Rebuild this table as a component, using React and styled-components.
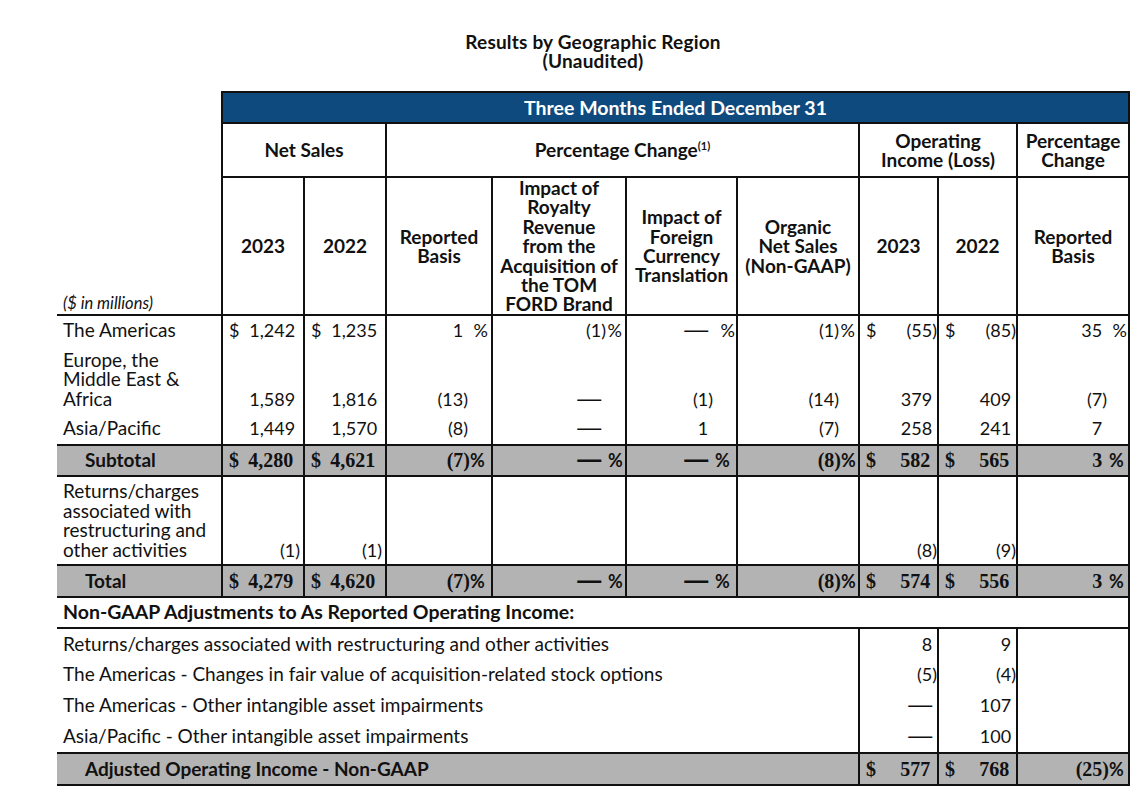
import React from "react";
import styled, { createGlobalStyle } from "styled-components";

const INK = "#111";
const LINE = `2px solid ${INK}`;

const GlobalStyle = createGlobalStyle`
  body {
    margin: 0;
    background: #fff;
    color: ${INK};
    font-family: Lato, "Noto Sans", sans-serif;
  }
`;

const Page = styled.div`
  width: 1072px;
  padding: 32px 0 0 57px;
`;

const Title = styled.header`
  margin-bottom: 21px;

  font-size: 19px;
  font-weight: 700;
  letter-spacing: 0.2px;
  line-height: 19px;
  text-align: center;
`;

const Table = styled.table`
  width: 1072px;
  border-collapse: collapse;
  table-layout: fixed;

  font-size: 19px;
`;

/* td height is content-box here, so the row adds padding and half borders */
const Row = styled.tr`
  background: ${({ $shade }) => ($shade ? "#b3b3b3" : "transparent")};

  & > td {
    height: ${({ $h }) => $h}px;
    ${({ $top }) => $top && `border-top: ${LINE};`}
    ${({ $bottom }) => $bottom && `border-bottom: ${LINE};`}
  }
`;

// single-line rows sit centred, wrapped rows sit on their last line
const DataRow = styled(Row)`
  & > td {
    vertical-align: ${({ $wrap }) => ($wrap ? "bottom" : "middle")};
    padding-bottom: ${({ $wrap }) => ($wrap ? 4 : 0)}px;
  }
`;

const Blank = styled.td`
  padding: 0;
`;

const Banner = styled.td`
  padding: 0;
  border: ${LINE};

  background: #0e4a7e;
  color: #fff;

  font-size: 19.5px;
  font-weight: 700;
  text-align: center;
`;

const Head = styled.td`
  padding: 0 1px;
  border: ${LINE};

  font-weight: 700;
  line-height: 19.4px;
  text-align: center;
  vertical-align: middle;

  sup {
    font-size: 11px;
    line-height: 0;
  }
`;

const Units = styled.td`
  padding: 0 0 1px 6px;
  border-bottom: ${LINE};

  font-size: 16.5px;
  font-style: italic;
  vertical-align: bottom;
`;

const Label = styled.td`
  padding: 0 0 0 ${({ $indent }) => ($indent ? 28 : 6)}px;
  ${({ $edge }) => $edge && `border-right: ${LINE};`}

  font-size: ${({ $size }) => $size || 19}px;
  font-weight: ${({ $bold }) => ($bold ? 700 : 400)};
  line-height: 19.7px;
  white-space: nowrap;
`;

const NumCell = styled.td`
  padding: 0 ${({ $right }) => $right}px 0 6px;
  border-left: ${LINE};
  border-right: ${LINE};
`;

const Fig = styled.div`
  display: flex;
  justify-content: space-between;
  align-items: baseline;

  font-family: ${({ $bold }) =>
    $bold ? '"Liberation Serif", serif' : 'Lato, "Noto Sans", sans-serif'};
  font-size: ${({ $bold }) => ($bold ? 20 : 18)}px;
  font-weight: ${({ $bold }) => ($bold ? 700 : 400)};
  line-height: 20px;
  white-space: nowrap;
`;

const Hidden = styled.span`
  visibility: ${({ $show }) => ($show ? "visible" : "hidden")};
`;

const Pct = styled(Hidden)`
  display: inline-block;
  width: ${({ $w }) => $w}px;

  font-family: Lato, "Noto Sans", sans-serif;
  font-size: 18px;
  font-weight: ${({ $bold }) => ($bold ? 700 : 400)};
  text-align: ${({ $bold }) => ($bold ? "left" : "right")};
`;

const Dash = styled.span`
  font-family: "Liberation Sans", sans-serif;
  font-size: 24px;
  line-height: 0;
`;

const Amount = ({ d, v, neg, pct, slot, bold }) => {
  if (v === undefined) return null;
  const shown = v === "—" ? <Dash>—</Dash> : v;
  return (
    <Fig $bold={bold}>
      <span>{d ? "$" : ""}</span>
      <span>
        {neg && "("}
        {shown}
        <Hidden $show={neg}>)</Hidden>
        {slot > 0 && (
          <Pct $w={bold ? slot - 2 : slot} $show={pct} $bold={bold}>
            %
          </Pct>
        )}
      </span>
    </Fig>
  );
};

const slots = [0, 0, 20, 16, 22, 16, 0, 0, 20];
const rightPad = [3, 3, 3, 3, 1, 3, 0, 0, 1];
const widths = [165, 82, 82, 106, 134, 111, 122, 79, 79, 112];

const regions = [
  {
    label: "The Americas",
    h: 29,
    top: true,
    cells: [
      { d: 1, v: "1,242" },
      { d: 1, v: "1,235" },
      { v: "1", pct: 1 },
      { v: "1", neg: 1, pct: 1 },
      { v: "—", pct: 1 },
      { v: "1", neg: 1, pct: 1 },
      { d: 1, v: "55", neg: 1 },
      { d: 1, v: "85", neg: 1 },
      { v: "35", pct: 1 },
    ],
  },
  {
    label: ["Europe, the", "Middle East &", "Africa"],
    h: 64,
    wrap: true,
    cells: [
      { v: "1,589" },
      { v: "1,816" },
      { v: "13", neg: 1 },
      { v: "—" },
      { v: "1", neg: 1 },
      { v: "14", neg: 1 },
      { v: "379" },
      { v: "409" },
      { v: "7", neg: 1 },
    ],
  },
  {
    label: "Asia/Pacific",
    h: 31,
    cells: [
      { v: "1,449" },
      { v: "1,570" },
      { v: "8", neg: 1 },
      { v: "—" },
      { v: "1" },
      { v: "7", neg: 1 },
      { v: "258" },
      { v: "241" },
      { v: "7" },
    ],
  },
  {
    label: "Subtotal",
    h: 29,
    total: true,
    cells: [
      { d: 1, v: "4,280" },
      { d: 1, v: "4,621" },
      { v: "7", neg: 1, pct: 1 },
      { v: "—", pct: 1 },
      { v: "—", pct: 1 },
      { v: "8", neg: 1, pct: 1 },
      { d: 1, v: "582" },
      { d: 1, v: "565" },
      { v: "3", pct: 1 },
    ],
  },
  {
    label: ["Returns/charges", "associated with", "restructuring and", "other activities"],
    h: 83,
    wrap: true,
    cells: [
      { v: "1", neg: 1 },
      { v: "1", neg: 1 },
      {},
      {},
      {},
      {},
      { v: "8", neg: 1 },
      { v: "9", neg: 1 },
      {},
    ],
  },
  {
    label: "Total",
    h: 30,
    total: true,
    cells: [
      { d: 1, v: "4,279" },
      { d: 1, v: "4,620" },
      { v: "7", neg: 1, pct: 1 },
      { v: "—", pct: 1 },
      { v: "—", pct: 1 },
      { v: "8", neg: 1, pct: 1 },
      { d: 1, v: "574" },
      { d: 1, v: "556" },
      { v: "3", pct: 1 },
    ],
  },
];

const adjustments = [
  { label: "Returns/charges associated with restructuring and other activities", a: { v: "8" }, b: { v: "9" }, h: 30 },
  { label: "The Americas - Changes in fair value of acquisition-related stock options", a: { v: "5", neg: 1 }, b: { v: "4", neg: 1 } },
  { label: "The Americas - Other intangible asset impairments", a: { v: "—" }, b: { v: "107" } },
  { label: "Asia/Pacific - Other intangible asset impairments", a: { v: "—" }, b: { v: "100" } },
];

const renderLabel = (label) =>
  Array.isArray(label)
    ? label.map((line, i) => (
        <React.Fragment key={line}>
          {i > 0 && <br />}
          {line}
        </React.Fragment>
      ))
    : label;

const App = () => (
  <>
    <GlobalStyle />
    <Page>
      <Title>
        Results by Geographic Region
        <br />
        (Unaudited)
      </Title>
      <Table>
        <colgroup>
          {widths.map((w, i) => (
            <col key={i} style={{ width: w }} />
          ))}
        </colgroup>
        <tbody>
          <Row $h={29}>
            <Blank />
            <Banner colSpan={9}>Three Months Ended December 31</Banner>
          </Row>
          <Row $h={52}>
            <Blank />
            <Head colSpan={2}>Net Sales</Head>
            <Head colSpan={4}>
              Percentage Change<sup>(1)</sup>
            </Head>
            <Head colSpan={2}>
              Operating
              <br />
              Income (Loss)
            </Head>
            <Head>
              Percentage
              <br />
              Change
            </Head>
          </Row>
          <Row $h={129}>
            <Units>($ in millions)</Units>
            <Head>2023</Head>
            <Head>2022</Head>
            <Head>
              Reported
              <br />
              Basis
            </Head>
            <Head>
              Impact of
              <br />
              Royalty
              <br />
              Revenue
              <br />
              from the
              <br />
              Acquisition of
              <br />
              the TOM
              <br />
              FORD Brand
            </Head>
            <Head>
              Impact of
              <br />
              Foreign
              <br />
              Currency
              <br />
              Translation
            </Head>
            <Head>
              Organic
              <br />
              Net Sales
              <br />
              (Non-GAAP)
            </Head>
            <Head>2023</Head>
            <Head>2022</Head>
            <Head>
              Reported
              <br />
              Basis
            </Head>
          </Row>

          {regions.map((r) => (
            <DataRow
              key={renderLabel(r.label).toString()}
              $h={r.h}
              $wrap={r.wrap}
              $shade={r.total}
              $top={r.top || r.total}
              $bottom={r.total}
            >
              <Label $bold={r.total} $indent={r.total}>
                {renderLabel(r.label)}
              </Label>
              {r.cells.map((c, i) => (
                <NumCell key={i} $right={rightPad[i]}>
                  <Amount {...c} slot={slots[i]} bold={r.total} />
                </NumCell>
              ))}
            </DataRow>
          ))}

          <DataRow $h={29} $bottom>
            <Label colSpan={10} $bold $edge $size={19.5}>
              Non-GAAP Adjustments to As Reported Operating Income:
            </Label>
          </DataRow>
          {adjustments.map((r) => (
            <DataRow key={r.label} $h={r.h || 31}>
              <Label colSpan={7}>{r.label}</Label>
              <NumCell $right={0}>
                <Amount {...r.a} slot={0} />
              </NumCell>
              <NumCell $right={0}>
                <Amount {...r.b} slot={0} />
              </NumCell>
              <NumCell $right={1} />
            </DataRow>
          ))}
          <DataRow $h={30} $shade $top $bottom>
            <Label colSpan={7} $bold $indent>
              Adjusted Operating Income - Non-GAAP
            </Label>
            <NumCell $right={0}>
              <Amount d={1} v="577" slot={0} bold />
            </NumCell>
            <NumCell $right={0}>
              <Amount d={1} v="768" slot={0} bold />
            </NumCell>
            <NumCell $right={1}>
              <Amount v="25" neg={1} pct={1} slot={20} bold />
            </NumCell>
          </DataRow>
        </tbody>
      </Table>
    </Page>
  </>
);

export default App;
